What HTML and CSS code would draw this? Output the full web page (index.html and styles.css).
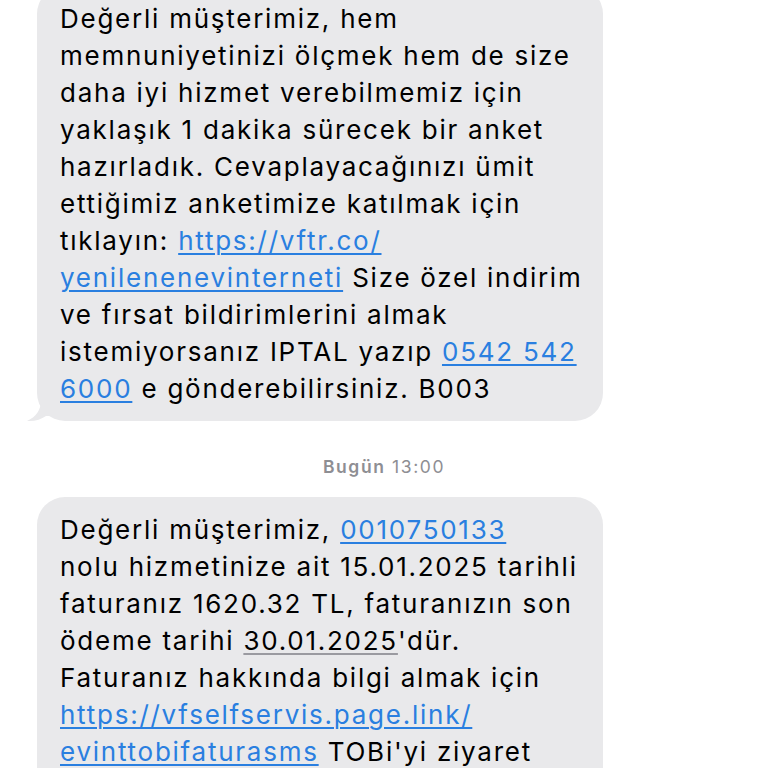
FILE: index.html
```html
<!DOCTYPE html>
<html lang="tr">
<head>
<meta charset="utf-8">
<link rel="stylesheet" href="styles.css">
</head>
<body>
<div class="thread">
  <div class="bubble first">
    <p class="msg">Değerli müşterimiz, hem<br>memnuniyetinizi ölçmek hem de size<br>daha iyi hizmet verebilmemiz için<br>yaklaşık 1 dakika sürecek bir anket<br>hazırladık. Cevaplayacağınızı ümit<br>ettiğimiz anketimize katılmak için<br>tıklayın: <a class="link">https://vftr.co/<br>yenilenenevinterneti</a> Size özel indirim<br>ve fırsat bildirimlerini almak<br>istemiyorsanız IPTAL yazıp <a class="link">0542 542<br>6000</a> e gönderebilirsiniz. B003</p>
    <svg class="tail" width="24" height="22" viewBox="0 0 24 22"><path d="M14 0 C14 10 9 17 0 21 C8 21.5 14 19.5 19 16 L24 16 L24 0 Z" fill="#e9e9eb"/></svg>
  </div>
  <div class="stamp"><span class="day">Bugün</span> 13:00</div>
  <div class="bubble last">
    <p class="msg">Değerli müşterimiz, <a class="link">0010750133</a><br>nolu hizmetinize ait 15.01.2025 tarihli<br>faturanız 1620.32 TL, faturanızın son<br>ödeme tarihi <span class="date">30.01.2025</span>'dür.<br>Faturanız hakkında bilgi almak için<br><a class="link">https://vfselfservis.page.link/<br>evinttobifaturasms</a> TOBi'yi ziyaret</p>
  </div>
</div>
</body>
</html>
```
FILE: styles.css
```css
html, body {
  margin: 0;
  padding: 0;
  background: #ffffff;
  height: 768px;
  overflow: hidden;
}
.thread {
  display: flex;
  flex-direction: column;
  align-items: flex-start;
  padding-left: 37px;
}
.bubble {
  position: relative;
  width: 566px;
  box-sizing: border-box;
  background: #e9e9eb;
  border-radius: 28px;
  padding: 14px 10px 14px 23px;
}
.bubble.first {
  margin-top: -14px;
}
.bubble.last {
  padding-bottom: 60px;
}
.tail {
  position: absolute;
  left: -10px;
  bottom: -1px;
}
.msg {
  margin: 0;
  font-family: Inter, "Liberation Sans", sans-serif;
  font-size: 26px;
  line-height: 37px;
  letter-spacing: 1.75px;
  color: #000;
  white-space: nowrap;
}
.link {
  color: #2a7fe0;
  text-decoration: underline;
  text-decoration-thickness: 1.5px;
  text-underline-offset: 3px;
}
.date {
  text-decoration: underline;
  text-decoration-color: #9a9aa0;
  text-decoration-thickness: 1.5px;
  text-underline-offset: 3px;
}
.stamp {
  align-self: stretch;
  margin-left: -37px;
  text-align: center;
  font-family: Inter, "Liberation Sans", sans-serif;
  font-size: 17.5px;
  line-height: 22px;
  letter-spacing: 1.6px;
  color: #8e8e93;
  margin-top: 35px;
  margin-bottom: 19px;
}
.day {
  font-weight: 600;
}
```
